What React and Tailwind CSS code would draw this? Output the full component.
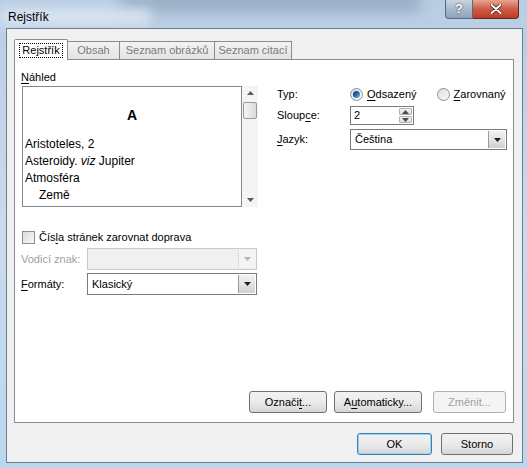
import React from 'react';

const font = { fontFamily: '"Liberation Sans", Arial, sans-serif' };

function U({ children }) {
  return <span className="underline underline-offset-[2px]">{children}</span>;
}

function DropArrow({ disabled }) {
  return (
    <div className={`w-[17px] h-full flex items-center justify-center border-l ${disabled ? 'border-[#dcdcdc] bg-[#f4f4f4]' : 'border-[#9a9a9a] bg-gradient-to-b from-[#f2f2f2] via-[#e4e4e4] to-[#cfcfcf]'}`}>
      <svg width="7" height="4" viewBox="0 0 7 4">
        <path d="M0 0h7L3.5 4z" fill={disabled ? '#b5b5b5' : '#1f1f1f'} />
      </svg>
    </div>
  );
}

function Select({ value, width, disabled, height = 'h-[22px]' }) {
  return (
    <div className={`${width} ${height} flex border ${disabled ? 'border-[#c9c9c9] bg-[#f0f0f0]' : 'border-[#7a7a7a] bg-white'}`}>
      <div className="flex-1 flex items-center pl-[4px] text-[11px] text-black">{value}</div>
      <div className="p-[1px] h-full"><DropArrow disabled={disabled} /></div>
    </div>
  );
}

function Button({ children, className = '', disabled, def }) {
  return (
    <div
      className={`h-[22px] flex items-center justify-center rounded-[3px] border text-[11px] ${className} ${
        disabled
          ? 'border-[#adb2b5] text-[#a0a0a0] bg-[#f4f4f4]'
          : def
          ? 'border-[#3c7fb1] text-black bg-gradient-to-b from-[#f2f2f2] via-[#ebebeb] to-[#d6d6d6] shadow-[inset_0_0_0_1px_#9bd3ee]'
          : 'border-[#707070] text-black bg-gradient-to-b from-[#f2f2f2] via-[#ebebeb] to-[#d6d6d6]'
      }`}
    >
      {children}
    </div>
  );
}

function Tab({ children, active, width }) {
  if (active) {
    return (
      <div className={`${width} h-[21px] -mb-[1px] bg-white border border-b-0 border-[#898c95] rounded-t-[2px] flex items-center justify-center relative z-10`}>
        <span className="border border-dotted border-black px-[2px] leading-[13px] text-[11px] text-black">{children}</span>
      </div>
    );
  }
  return (
    <div className={`${width} h-[18px] mt-[2px] bg-gradient-to-b from-[#f3f3f3] to-[#e3e3e3] border border-b-0 border-[#898c95] -ml-[1px] flex items-center justify-center text-[11px] text-[#7b7b7b]`}>
      {children}
    </div>
  );
}

function Radio({ checked }) {
  return (
    <div className="w-[13px] h-[13px] rounded-full border border-[#8e8f8f] bg-gradient-to-br from-[#dcdcdc] to-[#fbfbfb] flex items-center justify-center">
      {checked && <div className="w-[7px] h-[7px] rounded-full bg-gradient-to-br from-[#0d2d4c] via-[#1d6fb8] to-[#6fc0f0]" />}
    </div>
  );
}

export default function App() {
  return (
    <div className="w-[527px] h-[468px] relative overflow-hidden bg-gradient-to-b from-[#b9cde3] via-[#c9dbee] to-[#bcd6ee]" style={font}>
      {/* blurred aero band */}
      <div className="absolute left-[120px] top-[-6px] w-[300px] h-[16px] bg-[#7f95ae] blur-[8px] opacity-70" />
      <div className="absolute left-[0px] top-[8px] w-[150px] h-[18px] bg-[#dfe8f3] blur-[6px] opacity-80" />

      {/* title bar */}
      <div className="relative h-[28px] flex items-start">
        <div className="pl-[8px] pt-[10px] text-[12px] text-black leading-[14px]">Rejstřík</div>
        <div className="ml-auto mr-[8px] flex">
          <div className="w-[28px] h-[19px] rounded-bl-[4px] border border-[#5a6a7e] border-t-0 bg-gradient-to-b from-[#c9d5e2] via-[#a9b9ca] to-[#8ea3ba] flex items-center justify-center text-white font-bold text-[12px] [text-shadow:0_0_2px_#223]">?</div>
          <div className="w-[46px] h-[19px] rounded-br-[4px] border border-[#5a2b22] border-t-0 border-l-0 bg-gradient-to-b from-[#e8a493] via-[#cf5a42] to-[#c23a22] flex items-center justify-center">
            <svg width="12" height="10" viewBox="0 0 12 10">
              <path d="M1.5 1l9 8M10.5 1l-9 8" stroke="#3a1a14" strokeWidth="3.4" strokeLinecap="round" />
              <path d="M1.5 1l9 8M10.5 1l-9 8" stroke="#fff" strokeWidth="2" strokeLinecap="round" />
            </svg>
          </div>
        </div>
      </div>

      {/* client area */}
      <div className="relative ml-[6px] w-[517px] h-[435px] bg-[#f0f0f0] border border-[#6b7c90] pt-[10px] pl-[7px] pr-[9px]">
        {/* tabs */}
        <div className="flex items-end h-[20px]">
          <Tab active width="w-[54px]">
            Re<U>j</U>střík
          </Tab>
          <Tab width="w-[53px]">Obsah</Tab>
          <Tab width="w-[96px]">Seznam obrázků</Tab>
          <Tab width="w-[78px]">Seznam citací</Tab>
        </div>

        {/* tab panel */}
        <div className="w-[500px] h-[364px] bg-white border border-[#898c95] flex flex-col">
          <div className="flex flex-1">
            {/* left column */}
            <div className="w-[244px] pl-[6px] pt-[10px] flex flex-col">
              <div className="text-[11px] leading-[14px] text-black">
                <U>N</U>áhled
              </div>
              <div className="mt-[2px] ml-[1px] flex h-[121px]">
                <div className="w-[220px] h-full border border-[#828790] bg-white flex flex-col text-[12px] text-black">
                  <div className="h-[49px] pt-[19px] text-center font-bold text-[14px] leading-[18px]">A</div>
                  <div className="pl-[2px] flex flex-col leading-[17px]">
                    <div>Aristoteles, 2</div>
                    <div>
                      Asteroidy. <i>viz</i> Jupiter
                    </div>
                    <div>Atmosféra</div>
                    <div className="pl-[14px]">Země</div>
                  </div>
                </div>
                <div className="w-[16px] h-full bg-[#f4f4f4] flex flex-col items-center">
                  <div className="h-[14px] flex items-center justify-center">
                    <svg width="7" height="4" viewBox="0 0 7 4"><path d="M3.5 0L7 4H0z" fill="#5a5a5a" /></svg>
                  </div>
                  <div className="w-[14px] h-[17px] mt-[2px] rounded-[2px] border border-[#9a9a9a] bg-gradient-to-r from-[#f4f4f4] to-[#dcdcdc]" />
                  <div className="mt-auto h-[14px] flex items-center justify-center">
                    <svg width="7" height="4" viewBox="0 0 7 4"><path d="M0 0h7L3.5 4z" fill="#5a5a5a" /></svg>
                  </div>
                </div>
              </div>

              <div className="mt-[24px] ml-[1px] flex items-center gap-[4px] h-[13px]">
                <div className="w-[13px] h-[13px] border border-[#8e8f8f] bg-gradient-to-br from-[#dadada] to-[#f8f8f8]" />
                <span className="text-[11px] text-black">
                  Čís<U>l</U>a stránek zarovnat doprava
                </span>
              </div>

              <div className="mt-[4px] flex items-center">
                <span className="w-[66px] text-[11px] text-[#a0a0a0]">Vodicí znak:</span>
                <Select width="w-[170px]" disabled value="" />
              </div>
              <div className="mt-[3px] flex items-center">
                <span className="w-[66px] text-[11px] text-black">
                  <U>F</U>ormáty:
                </span>
                <Select width="w-[170px]" value="Klasický" />
              </div>
            </div>

            {/* right column */}
            <div className="pl-[18px] pt-[27px] flex flex-col text-[11px] text-black">
              <div className="flex items-center h-[14px]">
                <span className="w-[73px]">Typ:</span>
                <Radio checked />
                <span className="ml-[4px]">
                  <U>O</U>dsazený
                </span>
                <div className="ml-[20px]"><Radio /></div>
                <span className="ml-[4px]">
                  <U>Z</U>arovnaný
                </span>
              </div>
              <div className="mt-[5px] flex items-center">
                <span className="w-[73px]">
                  Sloup<U>c</U>e:
                </span>
                <div className="w-[64px] h-[19px] border border-[#7a7a7a] bg-white flex">
                  <div className="flex-1 pl-[3px] flex items-center">2</div>
                  <div className="w-[15px] p-[1px] flex flex-col gap-[1px]">
                    <div className="flex-1 border border-[#b3b3b3] rounded-[1px] bg-gradient-to-b from-[#f4f4f4] to-[#dedede] flex items-center justify-center">
                      <svg width="7" height="4" viewBox="0 0 7 4"><path d="M3.5 0L7 4H0z" fill="#4a4a4a" /></svg>
                    </div>
                    <div className="flex-1 border border-[#b3b3b3] rounded-[1px] bg-gradient-to-b from-[#f4f4f4] to-[#dedede] flex items-center justify-center">
                      <svg width="7" height="4" viewBox="0 0 7 4"><path d="M0 0h7L3.5 4z" fill="#4a4a4a" /></svg>
                    </div>
                  </div>
                </div>
              </div>
              <div className="mt-[4px] flex items-center">
                <span className="w-[73px]">
                  <U>J</U>azyk:
                </span>
                <Select width="w-[157px]" height="h-[21px]" value="Čeština" />
              </div>
            </div>
          </div>

          {/* panel buttons */}
          <div className="flex justify-end pr-[7px] pb-[9px]">
            <Button className="w-[78px]">
              Označi<U>t</U>...
            </Button>
            <Button className="w-[88px] ml-[7px]">
              A<U>u</U>tomaticky...
            </Button>
            <Button className="w-[73px] ml-[11px]" disabled>
              Změnit...
            </Button>
          </div>
        </div>

        {/* OK / Storno */}
        <div className="mt-[10px] flex justify-end">
          <Button def className="w-[75px]">OK</Button>
          <Button className="w-[72px] ml-[9px]">Storno</Button>
        </div>
      </div>
    </div>
  );
}
